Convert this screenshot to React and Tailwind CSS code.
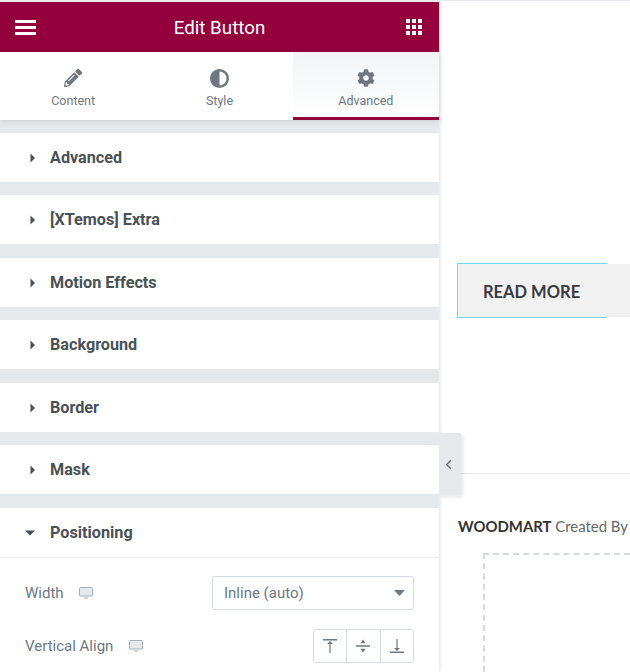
import { ChevronLeft } from "lucide-react";
import { FaPencilAlt, FaCog } from "react-icons/fa";

const sections = ["Advanced", "[XTemos] Extra", "Motion Effects", "Background", "Border", "Mask"];

function Caret({ open }) {
  return (
    <svg width="10" height="10" viewBox="0 0 10 10" className="shrink-0 text-[#495157]" fill="currentColor">
      {open ? <path d="M0 2.5h10L5 7.5z" /> : <path d="M2.5 0.5l4.5 4.5-4.5 4.5z" />}
    </svg>
  );
}

function Monitor() {
  return (
    <svg width="14" height="12" viewBox="0 0 14 12" className="text-[#a4afb7]">
      <rect x="0.5" y="0.5" width="13" height="8.5" rx="1" fill="#e6e9ec" stroke="currentColor" />
      <rect x="5" y="10.5" width="4" height="1" fill="currentColor" />
    </svg>
  );
}

function Section({ title }) {
  return (
    <div className="flex h-[49px] items-center gap-[12px] bg-white pl-[28px] pt-[0.6px]">
      <Caret />
      <span className="text-[16.2px] font-bold text-[#495157]">{title}</span>
    </div>
  );
}

function Tab({ icon, label, active }) {
  return (
    <div className={active ? "flex h-[68px] flex-1 flex-col items-center border-b-[3px] border-[#93003c] bg-gradient-to-b from-[#f1f3f5] to-white pt-[16px]" : "flex h-[68px] flex-1 flex-col items-center bg-white pt-[16px]"}>
      <div className="flex h-[20px] items-center text-[#6d7882]">{icon}</div>
      <span className="mt-[4px] text-[12.5px] text-[#6d7882]">{label}</span>
    </div>
  );
}

function AlignBtn({ children, last }) {
  return (
    <div className={last ? "flex flex-1 items-center justify-center" : "flex flex-1 items-center justify-center border-r border-[#d5dadf]"}>
      <svg width="16" height="16" viewBox="0 0 16 16" fill="#6d7882">{children}</svg>
    </div>
  );
}

export default function App() {
  return (
    <div className="relative flex h-[672px] w-[630px] overflow-hidden bg-white font-['Roboto',sans-serif]">
      <div className="flex w-[439px] shrink-0 flex-col bg-[#e6e9ec] pt-[2px] shadow-[1px_0_4px_rgba(0,0,0,0.12)]">
        <div className="flex h-[50px] items-center bg-[#93003c] pl-[15px] pr-[17px]">
          <div className="flex-1">
            <div className="flex w-[21px] flex-col gap-[3px]">
              <div className="h-[3px] bg-white" />
              <div className="h-[3px] bg-white" />
              <div className="h-[3px] bg-white" />
            </div>
          </div>
          <span className="ml-[2px] pt-[2px] text-[18.8px] text-white">Edit Button</span>
          <div className="flex flex-1 justify-end">
            <div className="grid grid-cols-3 gap-[2px]">
              {[...Array(9).keys()].map((i) => (
                <div key={i} className="size-[4px] bg-white" />
              ))}
            </div>
          </div>
        </div>

        <div className="flex shadow-[0_2px_6px_rgba(0,0,0,0.1)]">
          <Tab label="Content" icon={<FaPencilAlt size={18} />} />
          <Tab
            label="Style"
            icon={
              <svg width="19" height="19" viewBox="0 0 19 19" fill="currentColor">
                <path fillRule="evenodd" d="M9.5 0a9.5 9.5 0 1 0 0 19 9.5 9.5 0 0 0 0-19zm0 2.5a7 7 0 0 1 0 14z" />
              </svg>
            }
          />
          <Tab active label="Advanced" icon={<FaCog size={18} />} />
        </div>

        <div className="mt-[13px] flex flex-1 flex-col gap-[13.48px]">
          {sections.map((s) => (
            <Section key={s} title={s} />
          ))}
          <div className="flex-1 bg-white">
            <div className="flex h-[50px] items-center gap-[15px] border-b border-[#e6e9ec] pl-[25px] pt-[1.6px]">
              <Caret open />
              <span className="text-[16.2px] font-bold text-[#495157]">Positioning</span>
            </div>
            <div className="flex items-center justify-between px-[25px] pt-[18px]">
              <div className="flex items-center gap-[15px] text-[15px] text-[#6d7882]">
                Width <Monitor />
              </div>
              <div className="flex h-[34px] w-[202px] items-center justify-between rounded-[3px] border border-[#d5dadf] pl-[11px] pr-[8px] text-[15px] text-[#6d7882]">
                Inline (auto)
                <svg width="11" height="6" viewBox="0 0 11 6" fill="#6d7882"><path d="M0 0h11L5.5 6z" /></svg>
              </div>
            </div>
            <div className="flex items-center justify-between px-[25px] pt-[19px]">
              <div className="flex items-center gap-[16px] text-[15px] text-[#6d7882]">
                Vertical Align <Monitor />
              </div>
              <div className="flex h-[34px] w-[101px] rounded-[3px] border border-[#d5dadf]">
                <AlignBtn>
                  <path d="M1 1h14v1.5H1zM7.4 6H5l3-3 3 3H8.6v9H7.4z" />
                </AlignBtn>
                <AlignBtn>
                  <path d="M1 7.3h14v1.4H1zM8 1.5l2.5 3.7h-5zM8 14.5l-2.5-3.7h5z" />
                </AlignBtn>
                <AlignBtn last>
                  <path d="M1 13.5h14V15H1zM7.4 10H5l3 3 3-3H8.6V1H7.4z" />
                </AlignBtn>
              </div>
            </div>
          </div>
        </div>
      </div>

      <div className="flex flex-1 flex-col border-t border-[#e6e9ec] font-['Lato',sans-serif]">
        <div className="ml-[18px] mt-[262px] flex h-[55px]">
          <div className="flex w-[150px] items-center border-y border-l border-[#71d7f7] bg-[#f1f1f1] pl-[25px] pt-[3px] text-[16.5px] font-bold text-[#3a3a44]">
            READ MORE
          </div>
          <div className="my-px flex-1 bg-[#f1f1f1]" />
        </div>
        <div className="mt-[155px] h-px bg-[#e6e9ec]" />
        <div className="ml-[19px] mt-[43px] whitespace-nowrap text-[14.9px] leading-[18px] text-[#666]">
          <span className="font-bold text-[#333]">WOODMART</span> Created By
        </div>
        <div className="ml-[44px] mt-[18px] flex-1 border-l-2 border-t-2 border-dashed border-[#d5dadf]" />
      </div>

      <div className="absolute left-[439px] top-[433px] flex h-[62px] w-[22px] items-center justify-center bg-[#e6e9ec] pr-[4px] text-[#6d7882] shadow-[2px_2px_4px_rgba(0,0,0,0.1)]">
        <ChevronLeft size={15} strokeWidth={2.5} />
      </div>
    </div>
  );
}
